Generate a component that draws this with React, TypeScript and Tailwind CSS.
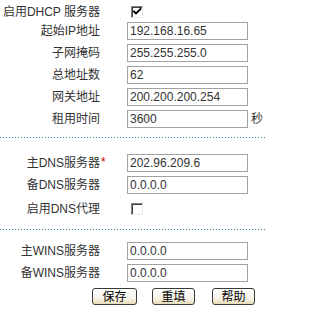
import React from "react";

const font = "font-['Liberation_Sans','Noto_Sans_CJK_SC',sans-serif]";

function Label({ children }: { children: React.ReactNode }) {
  return (
    <div className="w-[100px] shrink-0 text-right text-[12px] leading-[14px] text-[#333]">
      {children}
    </div>
  );
}

function InputRow({ label, value, suffix }: { label: React.ReactNode; value: string; suffix?: string }) {
  return (
    <div className="flex h-[22px] items-center">
      <Label>{label}</Label>
      <div className="ml-[27px] flex h-[18px] w-[121px] items-center border border-[#a3a3a3] bg-white pl-[2px] text-[12px] leading-[14px] text-[#333]">
        {value}
      </div>
      {suffix && <span className="ml-[3px] text-[12px] leading-[14px] text-[#333]">{suffix}</span>}
    </div>
  );
}

function CheckBox({ checked }: { checked: boolean }) {
  return (
    <div className="ml-[31px] h-[12px] w-[12px] border border-t-[#808080] border-l-[#808080] border-r-[#e8e8e8] border-b-[#e8e8e8] bg-white shadow-[inset_1px_1px_0_#404040]">
      {checked && (
        <svg width="10" height="10" viewBox="0 0 10 10" className="block">
          <path d="M2 4.5 L4 6.5 L8.5 2" stroke="#000" strokeWidth="1.8" fill="none" strokeLinecap="square" />
        </svg>
      )}
    </div>
  );
}

function Dotted() {
  return (
    <div className="h-[1px] w-full bg-[repeating-linear-gradient(to_right,#2f87ad_0px,#2f87ad_1px,transparent_1px,transparent_3px)]" />
  );
}

function Btn({ children, className }: { children: React.ReactNode; className?: string }) {
  return (
    <div
      className={
        "flex h-[17px] items-center justify-center rounded-[3px] border border-[#3a3a3a] bg-[linear-gradient(to_bottom,#ffffff,#f7f4ea_60%,#e6dcb8)] text-[12px] leading-[14px] text-black " +
        (className ?? "")
      }
    >
      {children}
    </div>
  );
}

export default function App() {
  return (
    <div className={"h-[314px] w-[265px] overflow-hidden bg-white " + font}>
      <div className="flex h-[20px] items-center pt-[4px]">
        <Label>启用DHCP 服务器</Label>
        <CheckBox checked />
      </div>
      <InputRow label="起始IP地址" value="192.168.16.65" />
      <InputRow label="子网掩码" value="255.255.255.0" />
      <InputRow label="总地址数" value="62" />
      <InputRow label="网关地址" value="200.200.200.254" />
      <InputRow label="租用时间" value="3600" suffix="秒" />
      <div className="mt-[7px]">
        <Dotted />
      </div>
      <div className="mt-[14px]">
        <InputRow
          label={
            <span className="relative">
              主DNS服务器
              <span className="absolute left-full top-[-1px] pl-[1px] text-[#d00000]">*</span>
            </span>
          }
          value="202.96.209.6"
        />
        <InputRow label="备DNS服务器" value="0.0.0.0" />
        <div className="flex h-[24px] items-center pt-[2px]">
          <Label>启用DNS代理</Label>
          <CheckBox checked={false} />
        </div>
      </div>
      <div className="mt-[9px]">
        <Dotted />
      </div>
      <div className="mt-[10px]">
        <InputRow label="主WINS服务器" value="0.0.0.0" />
        <InputRow label="备WINS服务器" value="0.0.0.0" />
      </div>
      <div className="flex pt-[4px] pl-[92px]">
        <Btn className="w-[45px]">保存</Btn>
        <Btn className="ml-[15px] w-[43px]">重填</Btn>
        <Btn className="ml-[17px] w-[43px]">帮助</Btn>
      </div>
    </div>
  );
}
